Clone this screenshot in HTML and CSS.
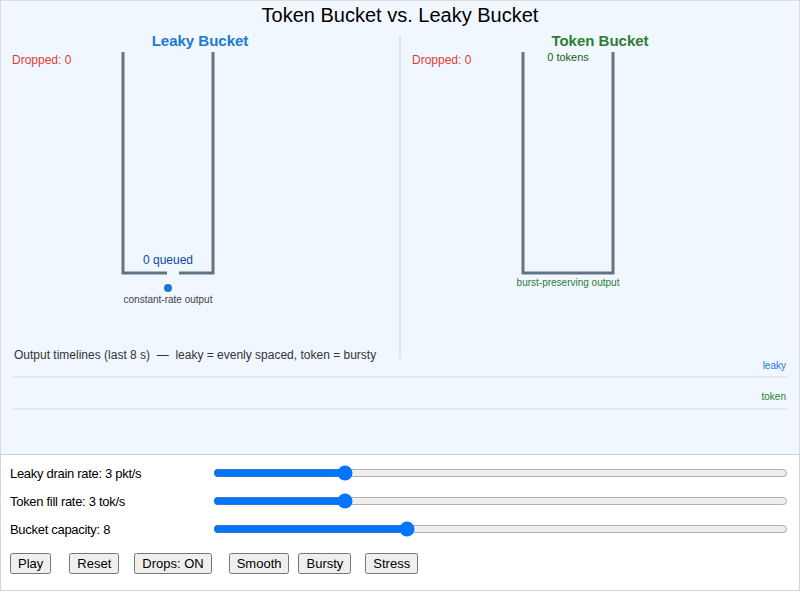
FILE: index.html
```html
<!DOCTYPE html>
<html>
<head>
<meta charset="UTF-8">
<title>Token Bucket vs. Leaky Bucket</title>
<link rel="stylesheet" href="styles.css">
</head>
<body>
<div class="stage">
<svg class="scene" width="798" height="453" viewBox="1 1 798 453">
  <text class="title" x="400" y="22">Token Bucket vs. Leaky Bucket</text>

  <!-- divider -->
  <line class="divider" x1="400" y1="36" x2="400" y2="359"/>

  <!-- leaky side -->
  <text class="head leaky" x="200" y="46">Leaky Bucket</text>
  <text class="dropped" x="12" y="64">Dropped: 0</text>
  <polyline class="wall" points="123,52 123,273 167,273"/>
  <polyline class="wall" points="179,273 213,273 213,52"/>
  <text class="count leaky-count" x="168" y="264">0 queued</text>
  <circle class="drip" cx="168" cy="288" r="4"/>
  <text class="note" x="168" y="303">constant-rate output</text>

  <!-- token side -->
  <text class="head token" x="600" y="46">Token Bucket</text>
  <text class="dropped" x="412" y="64">Dropped: 0</text>
  <polyline class="wall" points="523,52 523,273 613,273 613,52"/>
  <text class="count token-count" x="568" y="61">0 tokens</text>
  <text class="note token-note" x="568" y="286">burst-preserving output</text>

  <!-- timelines -->
  <text class="caption" x="14" y="359">Output timelines (last 8 s) &nbsp;—&nbsp; leaky = evenly spaced, token = bursty</text>
  <text class="lane leaky-lane" x="786" y="369">leaky</text>
  <line class="track" x1="13" y1="377" x2="787" y2="377"/>
  <text class="lane token-lane" x="786" y="400">token</text>
  <line class="track" x1="13" y1="409" x2="787" y2="409"/>
</svg>
</div>

<div class="controls">
  <div class="row">
    <span class="lbl">Leaky drain rate: 3 pkt/s</span>
    <input class="slider" type="range" min="1" max="10" value="3">
  </div>
  <div class="row">
    <span class="lbl">Token fill rate: 3 tok/s</span>
    <input class="slider" type="range" min="1" max="10" value="3">
  </div>
  <div class="row">
    <span class="lbl">Bucket capacity: 8</span>
    <input class="slider" type="range" min="2" max="20" value="8">
  </div>
  <div class="buttons">
    <button class="btn">Play</button>
    <button class="btn sp18">Reset</button>
    <button class="btn sp15">Drops: ON</button>
    <button class="btn sp17">Smooth</button>
    <button class="btn sp9">Bursty</button>
    <button class="btn sp14">Stress</button>
  </div>
</div>
</body>
</html>
```

FILE: styles.css
```css
body {
  margin: 0;
  font-family: "Liberation Sans", Arial, sans-serif;
  background: #ffffff;
}

.stage {
  width: 798px;
  height: 453px;
  border: 1px solid #d9dde2;
  border-bottom-color: #cfcfcf;
  background: #f0f7ff;
}

.scene {
  display: block;
}

.title {
  font-size: 20px;
  fill: #000;
  text-anchor: middle;
}

.divider {
  stroke: #dfe5ec;
  stroke-width: 2;
}

.head {
  font-size: 15px;
  font-weight: bold;
  text-anchor: middle;
}
.leaky { fill: #1e78d6; }
.token { fill: #2e7d32; }

.dropped {
  font-size: 12px;
  fill: #e53935;
}

.wall {
  fill: none;
  stroke: #5f7682;
  stroke-width: 3;
}

.count {
  font-size: 12px;
  text-anchor: middle;
}
.leaky-count { fill: #0d47a1; }
.token-count { fill: #1b5e20; font-size: 11px; }

.drip { fill: #1976d2; }

.note {
  font-size: 10px;
  fill: #444;
  text-anchor: middle;
}
.token-note { fill: #2e7d32; }

.caption {
  font-size: 12px;
  fill: #333;
}

.lane {
  font-size: 10px;
  text-anchor: end;
}
.leaky-lane { fill: #1e78d6; }
.token-lane { fill: #2e7d32; }

.track {
  stroke: #dfe5ec;
  stroke-width: 2;
}

.controls {
  height: 124px;
  border: 1px solid #d6d6d6;
  border-top: 0;
  padding: 4px 11px 7px 9px;
  font-size: 13px;
}

.row {
  display: flex;
  align-items: center;
  height: 28px;
}

.lbl {
  flex: 0 0 203px;
  font-size: 13px;
  letter-spacing: -0.3px;
  color: #000;
}

.slider {
  flex: 1;
  margin: 0;
}

.buttons {
  display: flex;
  margin-top: 10px;
}

.btn {
  font-family: "Liberation Sans", Arial, sans-serif;
  font-size: 13px;
  height: 21px;
  padding: 1px 6px;
}

.sp18 { margin-left: 18px; }
.sp15 { margin-left: 15px; }
.sp17 { margin-left: 17px; }
.sp9 { margin-left: 9px; }
.sp14 { margin-left: 14px; }
```
